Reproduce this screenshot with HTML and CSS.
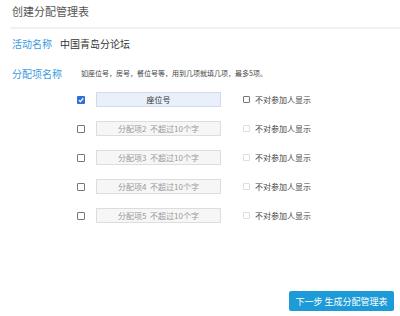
FILE: index.html
```html
<!DOCTYPE html>
<html lang="zh-CN">
<head>
    <meta charset="UTF-8">
    <title>创建分配管理表</title>
    <link rel="stylesheet" href="styles.css">
</head>
<body>

    <div class="header">创建分配管理表</div>

    <div class="field">
        <span class="field-label">活动名称</span>
        <span class="field-value">中国青岛分论坛</span>
    </div>

    <div class="field field-items">
        <span class="field-label">分配项名称</span>
        <span class="hint">如座位号，房号，餐位号等，用到几项就填几项，最多5项。</span>
    </div>

    <div class="items">
        <div class="item">
            <span class="check checked">
                <svg viewBox="0 0 8 8" width="8" height="8"><path d="M1.8 4.1 L3.4 5.6 L6.3 2.3" fill="none" stroke="#fff" stroke-width="1.3"/></svg>
            </span>
            <div class="item-input filled">座位号</div>
            <span class="check small"></span>
            <span class="item-note">不对参加人显示</span>
        </div>
        <div class="item">
            <span class="check"></span>
            <div class="item-input">分配项2&nbsp; 不超过10个字</div>
            <span class="check small disabled"></span>
            <span class="item-note">不对参加人显示</span>
        </div>
        <div class="item">
            <span class="check"></span>
            <div class="item-input">分配项3&nbsp; 不超过10个字</div>
            <span class="check small disabled"></span>
            <span class="item-note">不对参加人显示</span>
        </div>
        <div class="item">
            <span class="check"></span>
            <div class="item-input">分配项4&nbsp; 不超过10个字</div>
            <span class="check small disabled"></span>
            <span class="item-note">不对参加人显示</span>
        </div>
        <div class="item">
            <span class="check"></span>
            <div class="item-input">分配项5&nbsp; 不超过10个字</div>
            <span class="check small disabled"></span>
            <span class="item-note">不对参加人显示</span>
        </div>
    </div>

    <div class="footer">
        <button class="next-btn">下一步 生成分配管理表</button>
    </div>

</body>
</html>
```

FILE: styles.css
```css
/* Page */
body {
    margin: 0;
    background-color: #fff;
    color: #333;
    font-family: "Noto Sans CJK SC", "Noto Sans", sans-serif;
}

.header {
    margin-left: 10px;
    padding-left: 2px;
    height: 27px;
    line-height: 22px;
    font-size: 11px;
    color: #555;
    border-bottom: 2px solid #f1f1f1;
}

.field {
    display: flex;
    align-items: center;
    height: 14px;
    margin-top: 7px;
    padding-left: 12px;
}

.field-label {
    font-size: 10px;
    color: #3a9be0;
}

.field-value {
    margin-left: 8px;
    font-size: 10px;
    color: #333;
}

.field-items {
    margin-top: 16px;
}

.hint {
    margin-left: 19px;
    font-size: 7px;
    color: #444;
}

/* Items list */
.items {
    margin-top: 12px;
    padding-left: 77px;
}

.item {
    display: flex;
    align-items: center;
    height: 15px;
    margin-bottom: 14px;
}

.check {
    box-sizing: border-box;
    width: 8px;
    height: 8px;
    border: 1px solid #777;
    border-radius: 1px;
    background-color: #fff;
    display: flex;
    align-items: center;
    justify-content: center;
}

.check.checked {
    border: none;
    background-color: #2f6fd4;
}

.check.small {
    width: 7px;
    height: 7px;
    margin-left: 22px;
}

.check.disabled {
    border-color: #ddd;
}

.item-input {
    box-sizing: border-box;
    width: 125px;
    height: 15px;
    margin-left: 11px;
    border: 1px solid #ddd;
    background-color: #f6f6f6;
    color: #999;
    font-size: 8px;
    line-height: 13px;
    text-align: center;
}

.item-input.filled {
    background-color: #e9f0fc;
    border-color: #d3dbe8;
    color: #333;
}

.item-note {
    margin-left: 5px;
    font-size: 8px;
    color: #444;
}

/* Footer */
.footer {
    display: flex;
    justify-content: flex-end;
    margin-top: 68px;
    padding-right: 6px;
}

.next-btn {
    width: 105px;
    height: 20px;
    padding: 0;
    border: none;
    border-radius: 2px;
    background-color: #1d9bd8;
    color: #fff;
    font-family: inherit;
    font-size: 9px;
    cursor: pointer;
}
```
